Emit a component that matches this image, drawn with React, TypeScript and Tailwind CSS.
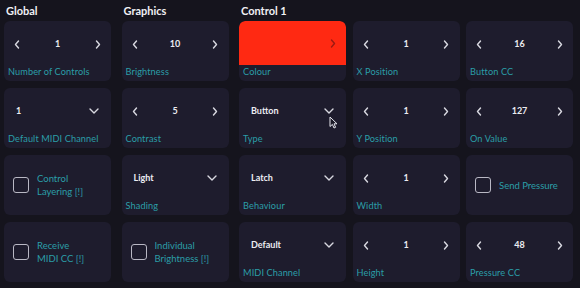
import React from "react";

type Cell =
  | { kind: "stepper"; value: string; label: string }
  | { kind: "select"; value: string; label: string }
  | { kind: "check"; lines: string[] }
  | { kind: "colour"; label: string };

const font = { fontFamily: "Lato, 'Noto Sans', sans-serif" };

function ChevronLeft() {
  return (
    <svg width="6" height="9" viewBox="0 0 6 9" fill="none">
      <path d="M4.5 1 L1.5 4.5 L4.5 8" stroke="#d8d8e0" strokeWidth="1.4" strokeLinecap="round" strokeLinejoin="round" />
    </svg>
  );
}

function ChevronRight({ color = "#d8d8e0" }: { color?: string }) {
  return (
    <svg width="6" height="9" viewBox="0 0 6 9" fill="none">
      <path d="M1.5 1 L4.5 4.5 L1.5 8" stroke={color} strokeWidth="1.4" strokeLinecap="round" strokeLinejoin="round" />
    </svg>
  );
}

function ChevronDown() {
  return (
    <svg width="10" height="6" viewBox="0 0 10 6" fill="none">
      <path d="M1 1 L5 5 L9 1" stroke="#d8d8e0" strokeWidth="1.4" strokeLinecap="round" strokeLinejoin="round" />
    </svg>
  );
}

function Label({ children }: { children: React.ReactNode }) {
  return (
    <div className="mt-auto px-[4px] pb-[3px] text-[9.2px] leading-[12px] tracking-[0.1px] text-[#2b9ea8] whitespace-nowrap">
      {children}
    </div>
  );
}

function Card({ cell }: { cell: Cell }) {
  if (cell.kind === "colour") {
    return (
      <div className="flex h-[60px] w-[107px] flex-col overflow-hidden rounded-md bg-[#1e1c2d]">
        <div className="flex h-[44px] items-center justify-end rounded-t-md bg-[#ff2912] pr-[10px]">
          <ChevronRight color="#9c1a12" />
        </div>
        <Label>{cell.label}</Label>
      </div>
    );
  }
  if (cell.kind === "check") {
    return (
      <div className="flex h-[60px] w-[107px] items-center gap-[8px] rounded-md bg-[#1e1c2d] pl-[9px]">
        <div className="h-[16px] w-[16px] shrink-0 rounded-[3px] border-[1.5px] border-[#b9b8c4]" />
        <div className="text-[9.5px] leading-[13px] text-[#2b9ea8]">
          {cell.lines.map((l) => (
            <div key={l} className="whitespace-nowrap">{l}</div>
          ))}
        </div>
      </div>
    );
  }
  return (
    <div className="flex h-[60px] w-[107px] flex-col rounded-md bg-[#1e1c2d]">
      {cell.kind === "stepper" ? (
        <div className="mt-[15px] flex h-[16px] items-center justify-between px-[10px]">
          <ChevronLeft />
          <span className="text-[9px] font-bold text-[#ececf2]">{cell.value}</span>
          <ChevronRight />
        </div>
      ) : (
        <div className="mt-[15px] flex h-[16px] items-center justify-between pl-[12px] pr-[12px]">
          <span className="text-[9px] font-bold text-[#ececf2]">{cell.value}</span>
          <ChevronDown />
        </div>
      )}
      <Label>{cell.label}</Label>
    </div>
  );
}

const globalCells: Cell[] = [
  { kind: "stepper", value: "1", label: "Number of Controls" },
  { kind: "select", value: "1", label: "Default MIDI Channel" },
  { kind: "check", lines: ["Control", "Layering [!]"] },
  { kind: "check", lines: ["Receive", "MIDI CC [!]"] },
];

const graphicsCells: Cell[] = [
  { kind: "stepper", value: "10", label: "Brightness" },
  { kind: "stepper", value: "5", label: "Contrast" },
  { kind: "select", value: "Light", label: "Shading" },
  { kind: "check", lines: ["Individual", "Brightness [!]"] },
];

const controlCells: Cell[] = [
  { kind: "colour", label: "Colour" },
  { kind: "stepper", value: "1", label: "X Position" },
  { kind: "stepper", value: "16", label: "Button CC" },
  { kind: "select", value: "Button", label: "Type" },
  { kind: "stepper", value: "1", label: "Y Position" },
  { kind: "stepper", value: "127", label: "On Value" },
  { kind: "select", value: "Latch", label: "Behaviour" },
  { kind: "stepper", value: "1", label: "Width" },
  { kind: "check", lines: ["Send Pressure"] },
  { kind: "select", value: "Default", label: "MIDI Channel" },
  { kind: "stepper", value: "1", label: "Height" },
  { kind: "stepper", value: "48", label: "Pressure CC" },
];

function Heading({ children }: { children: React.ReactNode }) {
  return (
    <div className="h-[21px] pl-[2px] text-[11px] font-bold leading-[21px] text-[#f0f0f4]">{children}</div>
  );
}

export default function App() {
  return (
    <div className="relative h-[288px] w-[580px] overflow-hidden bg-[#15141d]" style={font}>
      <div className="flex gap-[10.5px] pl-[4px]">
        <div>
          <Heading>Global</Heading>
          <div className="flex flex-col gap-[7px]">
            {globalCells.map((c, i) => (
              <Card key={i} cell={c} />
            ))}
          </div>
        </div>
        <div>
          <Heading>Graphics</Heading>
          <div className="flex flex-col gap-[7px]">
            {graphicsCells.map((c, i) => (
              <Card key={i} cell={c} />
            ))}
          </div>
        </div>
        <div>
          <Heading>Control 1</Heading>
          <div className="grid grid-cols-[107px_107px_107px] gap-x-[6.5px] gap-y-[7px]">
            {controlCells.map((c, i) => (
              <Card key={i} cell={c} />
            ))}
          </div>
        </div>
      </div>
      {/* mouse pointer */}
      <svg className="absolute left-[329px] top-[116px]" width="9" height="13" viewBox="0 0 9 13">
        <path d="M1 1 L1 10.5 L3.4 8.4 L5 12 L6.6 11.3 L5 7.8 L8 7.8 Z" fill="#1a1926" stroke="#e6e6ee" strokeWidth="1" strokeLinejoin="round" />
      </svg>
    </div>
  );
}
